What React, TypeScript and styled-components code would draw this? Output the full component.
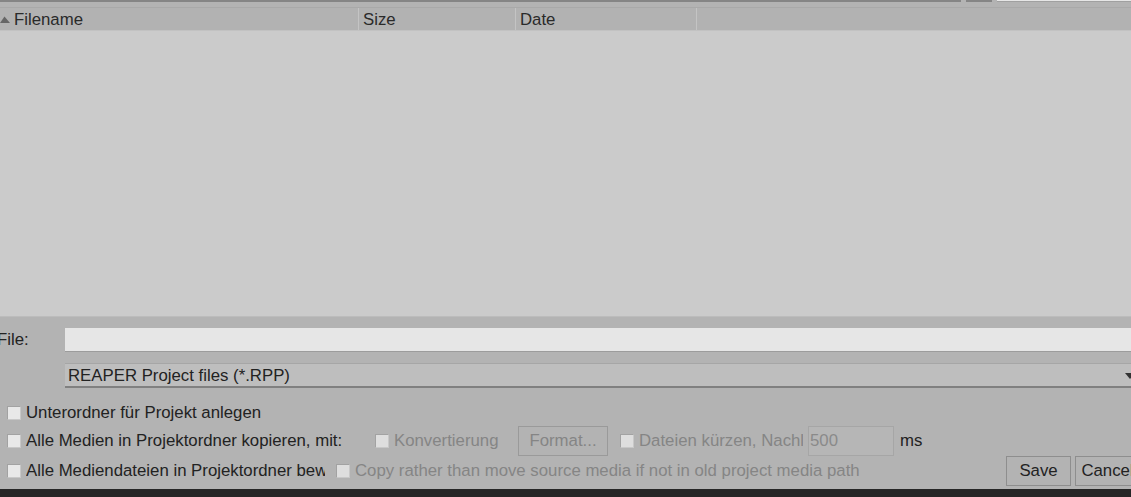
import styled, { createGlobalStyle } from 'styled-components';

const Global = createGlobalStyle`
  html, body { margin: 0; padding: 0; background: #b3b3b3; }
  body { font-family: "Liberation Sans", Arial, sans-serif; }
`;

const Dialog = styled.div`
  width: 1131px;
  height: 497px;
  overflow: hidden;
  background: #b3b3b3;
  display: flex;
  flex-direction: column;
  font-size: 16.8px;
  color: #222;
`;

/* remnants of the path bar above the list */
const TopStrip = styled.div`
  height: 7px;
  display: flex;
  align-items: flex-start;
`;
const PathCombo = styled.div`
  width: 961px;
  height: 0;
  border-bottom: 2px solid #858585;
`;
const UpButton = styled.div`
  width: 26px;
  height: 0;
  margin-left: 5px;
  border-bottom: 2px solid #858585;
`;
const SearchField = styled.div`
  flex: 1;
  margin-left: 5px;
  height: 1px;
  background: #e6e6e6;
  border-bottom: 1px solid #a0a0a0;
`;

const List = styled.div`
  height: 308px;
  border-top: 1px solid #a9a9a9;
  border-bottom: 1px solid #bcbcbc;
  display: flex;
  flex-direction: column;
`;
const Header = styled.div`
  display: grid;
  grid-template-columns: 359px 157px 181px 1fr;
  height: 22px;
  background: #b2b2b2;
  border-bottom: 1px solid #c2c2c2;
`;
const HeaderCell = styled.div`
  display: flex;
  align-items: center;
  gap: 4px;
  padding-top: 2px;
  padding-left: ${p => (p.$sorted ? '0' : '4px')};
  border-right: 1px solid #c4c4c4;
  white-space: nowrap;
  color: #2a2a2a;
  &:last-child { border-right: none; }
`;
const SortArrow = styled.svg`
  width: 10px;
  height: 7px;
  margin-top: -2px;
`;
const Body = styled.div`
  flex: 1;
  background: #cbcbcb;
`;

const Form = styled.div`
  flex: 1;
  display: flex;
  flex-direction: column;
  padding-top: 11px;
`;
const FileRow = styled.div`
  display: flex;
  align-items: center;
  height: 24px;
  margin-left: -3px;
`;
const FileLabel = styled.span`
  width: 68px;
  color: #222;
`;
const TextField = styled.div`
  flex: 1;
  height: 24px;
  background: #e6e6e6;
  border-bottom: 1px solid #9c9c9c;
  box-sizing: border-box;
`;
const TypeSelect = styled.div`
  margin: 11px -4px 0 65px;
  height: 25px;
  box-sizing: border-box;
  background: #bebebe;
  border-top: 1px solid #a6a6a6;
  border-bottom: 2px solid #808080;
  display: flex;
  align-items: center;
  justify-content: space-between;
  padding: 1px 0 0 3px;
  color: #222;
`;
const Arrow = styled.svg`
  width: 10px;
  height: 6px;
  margin-top: 1px;
`;

const Row = styled.div`
  display: flex;
  align-items: center;
  height: ${p => p.$h}px;
  margin-top: ${p => p.$mt || 0}px;
  padding-left: 7px;
`;
const CheckField = styled.label`
  display: flex;
  align-items: center;
  gap: 5px;
  width: ${p => (p.$w ? `${p.$w}px` : 'auto')};
  flex: ${p => (p.$grow ? 1 : 'none')};
  overflow: hidden;
  white-space: nowrap;
  color: ${p => (p.$disabled ? '#858585' : '#222')};
`;
const Box = styled.span`
  flex: none;
  width: 12px;
  height: 12px;
  background: ${p => (p.$disabled ? '#dedede' : '#e8e8e8')};
  border: 1px solid #a2a2a2;
  border-right-color: #c8c8c8;
  border-bottom-color: #c8c8c8;
`;
const LabelText = styled.span`
  overflow: hidden;
  width: ${p => (p.$w ? `${p.$w}px` : 'auto')};
`;
const Button = styled.div`
  flex: none;
  box-sizing: border-box;
  width: ${p => p.$w}px;
  height: 30px;
  margin-left: ${p => p.$ml || 0}px;
  margin-right: ${p => p.$mr || 0}px;
  border: 1px solid ${p => (p.$disabled ? '#9a9a9a' : '#8e8e8e')};
  display: flex;
  align-items: center;
  justify-content: center;
  color: ${p => (p.$disabled ? '#858585' : '#222')};
  white-space: nowrap;
`;
const NumberField = styled.div`
  flex: none;
  box-sizing: border-box;
  width: 86px;
  height: 30px;
  border: 1px solid #a6a6a6;
  background: #b6b6b6;
  color: #8a8a8a;
  display: flex;
  align-items: center;
  padding-left: 1px;
`;
const Unit = styled.span`
  margin-left: 6px;
  color: #222;
`;
const Spacer = styled.div`
  flex: 1;
`;
const Taskbar = styled.div`
  height: 8px;
  background: #262626;
`;

export default function App() {
  return (
    <>
      <Global />
      <Dialog>
        <TopStrip>
          <PathCombo />
          <UpButton />
          <SearchField />
        </TopStrip>

        <List>
          <Header>
            <HeaderCell $sorted>
              <SortArrow viewBox="0 0 10 7">
                <polygon points="0,7 10,7 4.5,0.5" fill="#666" />
              </SortArrow>
              Filename
            </HeaderCell>
            <HeaderCell>Size</HeaderCell>
            <HeaderCell>Date</HeaderCell>
            <HeaderCell />
          </Header>
          <Body />
        </List>

        <Form>
          <FileRow>
            <FileLabel>File:</FileLabel>
            <TextField />
          </FileRow>
          <TypeSelect>
            REAPER Project files (*.RPP)
            <Arrow viewBox="0 0 10 6">
              <polygon points="0,0 10,0 5,6" fill="#333" />
            </Arrow>
          </TypeSelect>

          <Row $h={20} $mt={15}>
            <CheckField>
              <Box />
              Unterordner für Projekt anlegen
            </CheckField>
          </Row>
          <Row $h={30} $mt={3}>
            <CheckField $w={368}>
              <Box />
              Alle Medien in Projektordner kopieren, mit:
            </CheckField>
            <CheckField $w={143} $disabled>
              <Box $disabled />
              Konvertierung
            </CheckField>
            <Button $w={90} $mr={12} $disabled>Format...</Button>
            <CheckField $w={188} $disabled>
              <Box $disabled />
              <LabelText $w={164}>Dateien kürzen, Nachlauf</LabelText>
            </CheckField>
            <NumberField>500</NumberField>
            <Unit>ms</Unit>
          </Row>
          <Row $h={30}>
            <CheckField $w={329}>
              <Box />
              <LabelText $w={299}>Alle Mediendateien in Projektordner bewegen</LabelText>
            </CheckField>
            <CheckField $disabled>
              <Box $disabled />
              Copy rather than move source media if not in old project media path
            </CheckField>
            <Spacer />
            <Button $w={65}>Save</Button>
            <Button $w={65} $ml={4} $mr={-9}>Cancel</Button>
          </Row>
          <Spacer />
        </Form>
        <Taskbar />
      </Dialog>
    </>
  );
}
